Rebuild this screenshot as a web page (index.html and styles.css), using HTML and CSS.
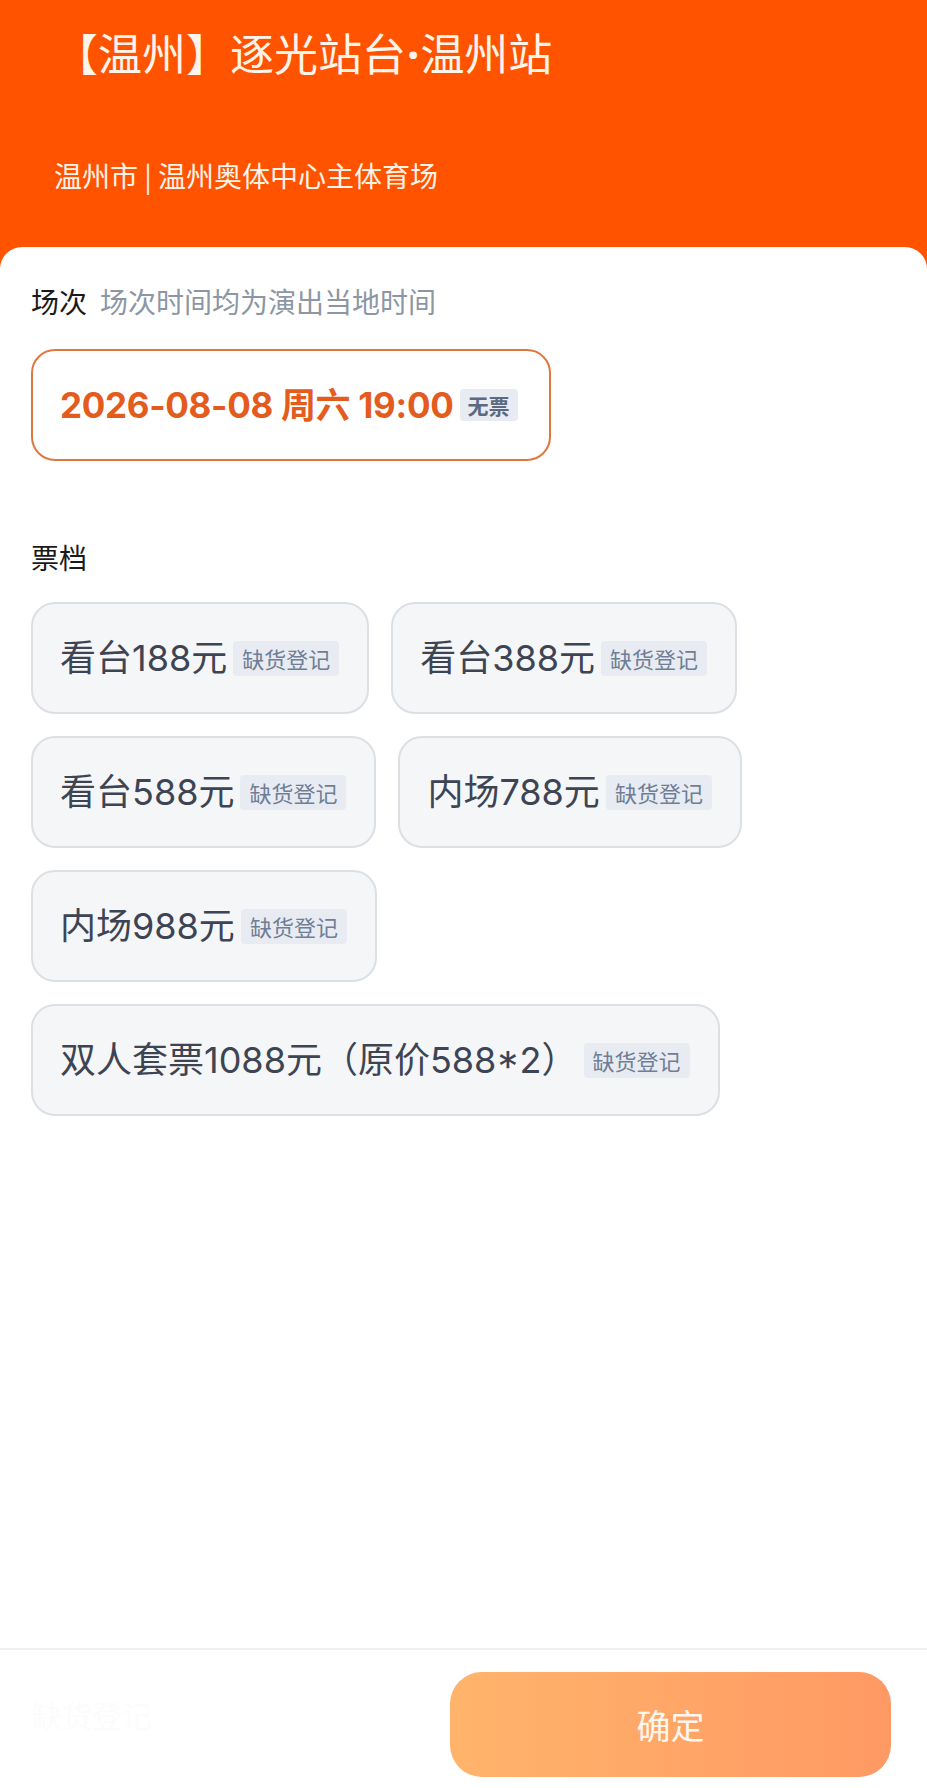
FILE: index.html
```html
<!DOCTYPE html>
<html lang="zh">
<head>
<meta charset="utf-8">
<title>温州站</title>
<link rel="stylesheet" href="styles.css">
</head>
<body>
<div class="page">
  <header class="hero">
    <h1 class="title">【温州】逐光站台<span class="dot">·</span>温州站</h1>
    <p class="venue">温州市 | 温州奥体中心主体育场</p>
  </header>
  <main class="sheet">
    <section class="block">
      <div class="label">场次<span class="hint">场次时间均为演出当地时间</span></div>
      <div class="options">
        <div class="opt session">
          <span class="session-text">2026-08-08 周六 19:00</span>
          <span class="tag tag-strong">无票</span>
        </div>
      </div>
    </section>
    <section class="block tickets">
      <div class="label">票档</div>
      <div class="options">
        <div class="opt"><span class="opt-text">看台188元</span><span class="tag">缺货登记</span></div>
        <div class="opt"><span class="opt-text">看台388元</span><span class="tag">缺货登记</span></div>
        <div class="opt"><span class="opt-text">看台588元</span><span class="tag">缺货登记</span></div>
        <div class="opt"><span class="opt-text">内场788元</span><span class="tag">缺货登记</span></div>
        <div class="opt"><span class="opt-text">内场988元</span><span class="tag">缺货登记</span></div>
        <div class="opt"><span class="opt-text">双人套票1088元（原价588*2）</span><span class="tag">缺货登记</span></div>
      </div>
    </section>
  </main>
  <footer class="bar">
    <span class="ghost">缺货登记</span>
    <button class="confirm">确定</button>
  </footer>
</div>
</body>
</html>
```
FILE: styles.css
```css
html, body {
  margin: 0;
  padding: 0;
}
body {
  font-family: "Noto Sans CJK SC", "Noto Sans", sans-serif;
  background: #ff5300;
  width: 927px;
  height: 1788px;
  overflow: hidden;
}
.page {
  display: flex;
  flex-direction: column;
  height: 1788px;
}
.hero {
  height: 247px;
  box-sizing: border-box;
  padding: 23px 0 0 0;
  background: #ff5300;
  color: #fff4ea;
}
.title {
  margin: 0;
  padding-left: 54px;
  font-size: 44px;
  font-weight: 400;
  line-height: 58px;
}
.dot {
  font-family: "Noto Sans", sans-serif;
  font-weight: 700;
  margin: 0 1px;
}
.venue {
  margin: 73px 0 0 0;
  padding-left: 54px;
  font-size: 28px;
  line-height: 38px;
}
.sheet {
  flex: 1;
  background: #fff;
  border-radius: 22px 22px 0 0;
  padding: 36px 31px 0 31px;
}
.label {
  font-size: 28px;
  line-height: 36px;
  color: #1a1a1a;
  display: flex;
  align-items: center;
}
.hint {
  margin-left: 13px;
  color: #8c96a5;
}
.options {
  display: flex;
  flex-wrap: wrap;
  gap: 22px;
  margin-top: 30px;
}
.opt {
  height: 112px;
  box-sizing: border-box;
  border: 2px solid #dcdfe4;
  background: #f5f6f8;
  border-radius: 24px;
  padding: 0 28px 0 27px;
  display: flex;
  align-items: center;
  gap: 6px;
}
.session {
  width: 520px;
  border-color: #e0773f;
  background: #fff;
}
.session-text {
  color: #e45c1d;
  font-weight: 700;
  font-size: 35px;
  line-height: 42px;
  font-family: "Inter", "Noto Sans CJK SC", sans-serif;
  letter-spacing: -0.3px;
}
.tag {
  background: #e8ecf2;
  color: #6f7e96;
  font-size: 22px;
  line-height: 35px;
  padding: 0 9px;
  border-radius: 4px;
}
.tag-strong {
  font-weight: 700;
  color: #5b6a82;
  font-size: 21px;
  line-height: 32px;
  padding: 0 8px;
}
.tickets {
  margin-top: 78px;
}
.tickets .options {
  margin-top: 27px;
}
.opt-text {
  color: #3d4453;
  font-family: "Inter", "Noto Sans CJK SC", sans-serif;
  font-size: 36px;
  line-height: 42px;
}
.bar {
  height: 140px;
  box-sizing: border-box;
  background: #fff;
  border-top: 2px solid #f0f0f0;
  display: flex;
  justify-content: space-between;
  align-items: flex-start;
  padding: 22px 36px 0 32px;
}
.ghost {
  margin-top: 20px;
  font-size: 30px;
  color: #fcfcfc;
}
.confirm {
  width: 441px;
  height: 105px;
  border: none;
  border-radius: 32px;
  background: linear-gradient(90deg, #ffb46b 0%, #ff9964 100%);
  color: #fff6ee;
  font-family: "Noto Sans CJK SC", sans-serif;
  font-size: 34px;
}
```
